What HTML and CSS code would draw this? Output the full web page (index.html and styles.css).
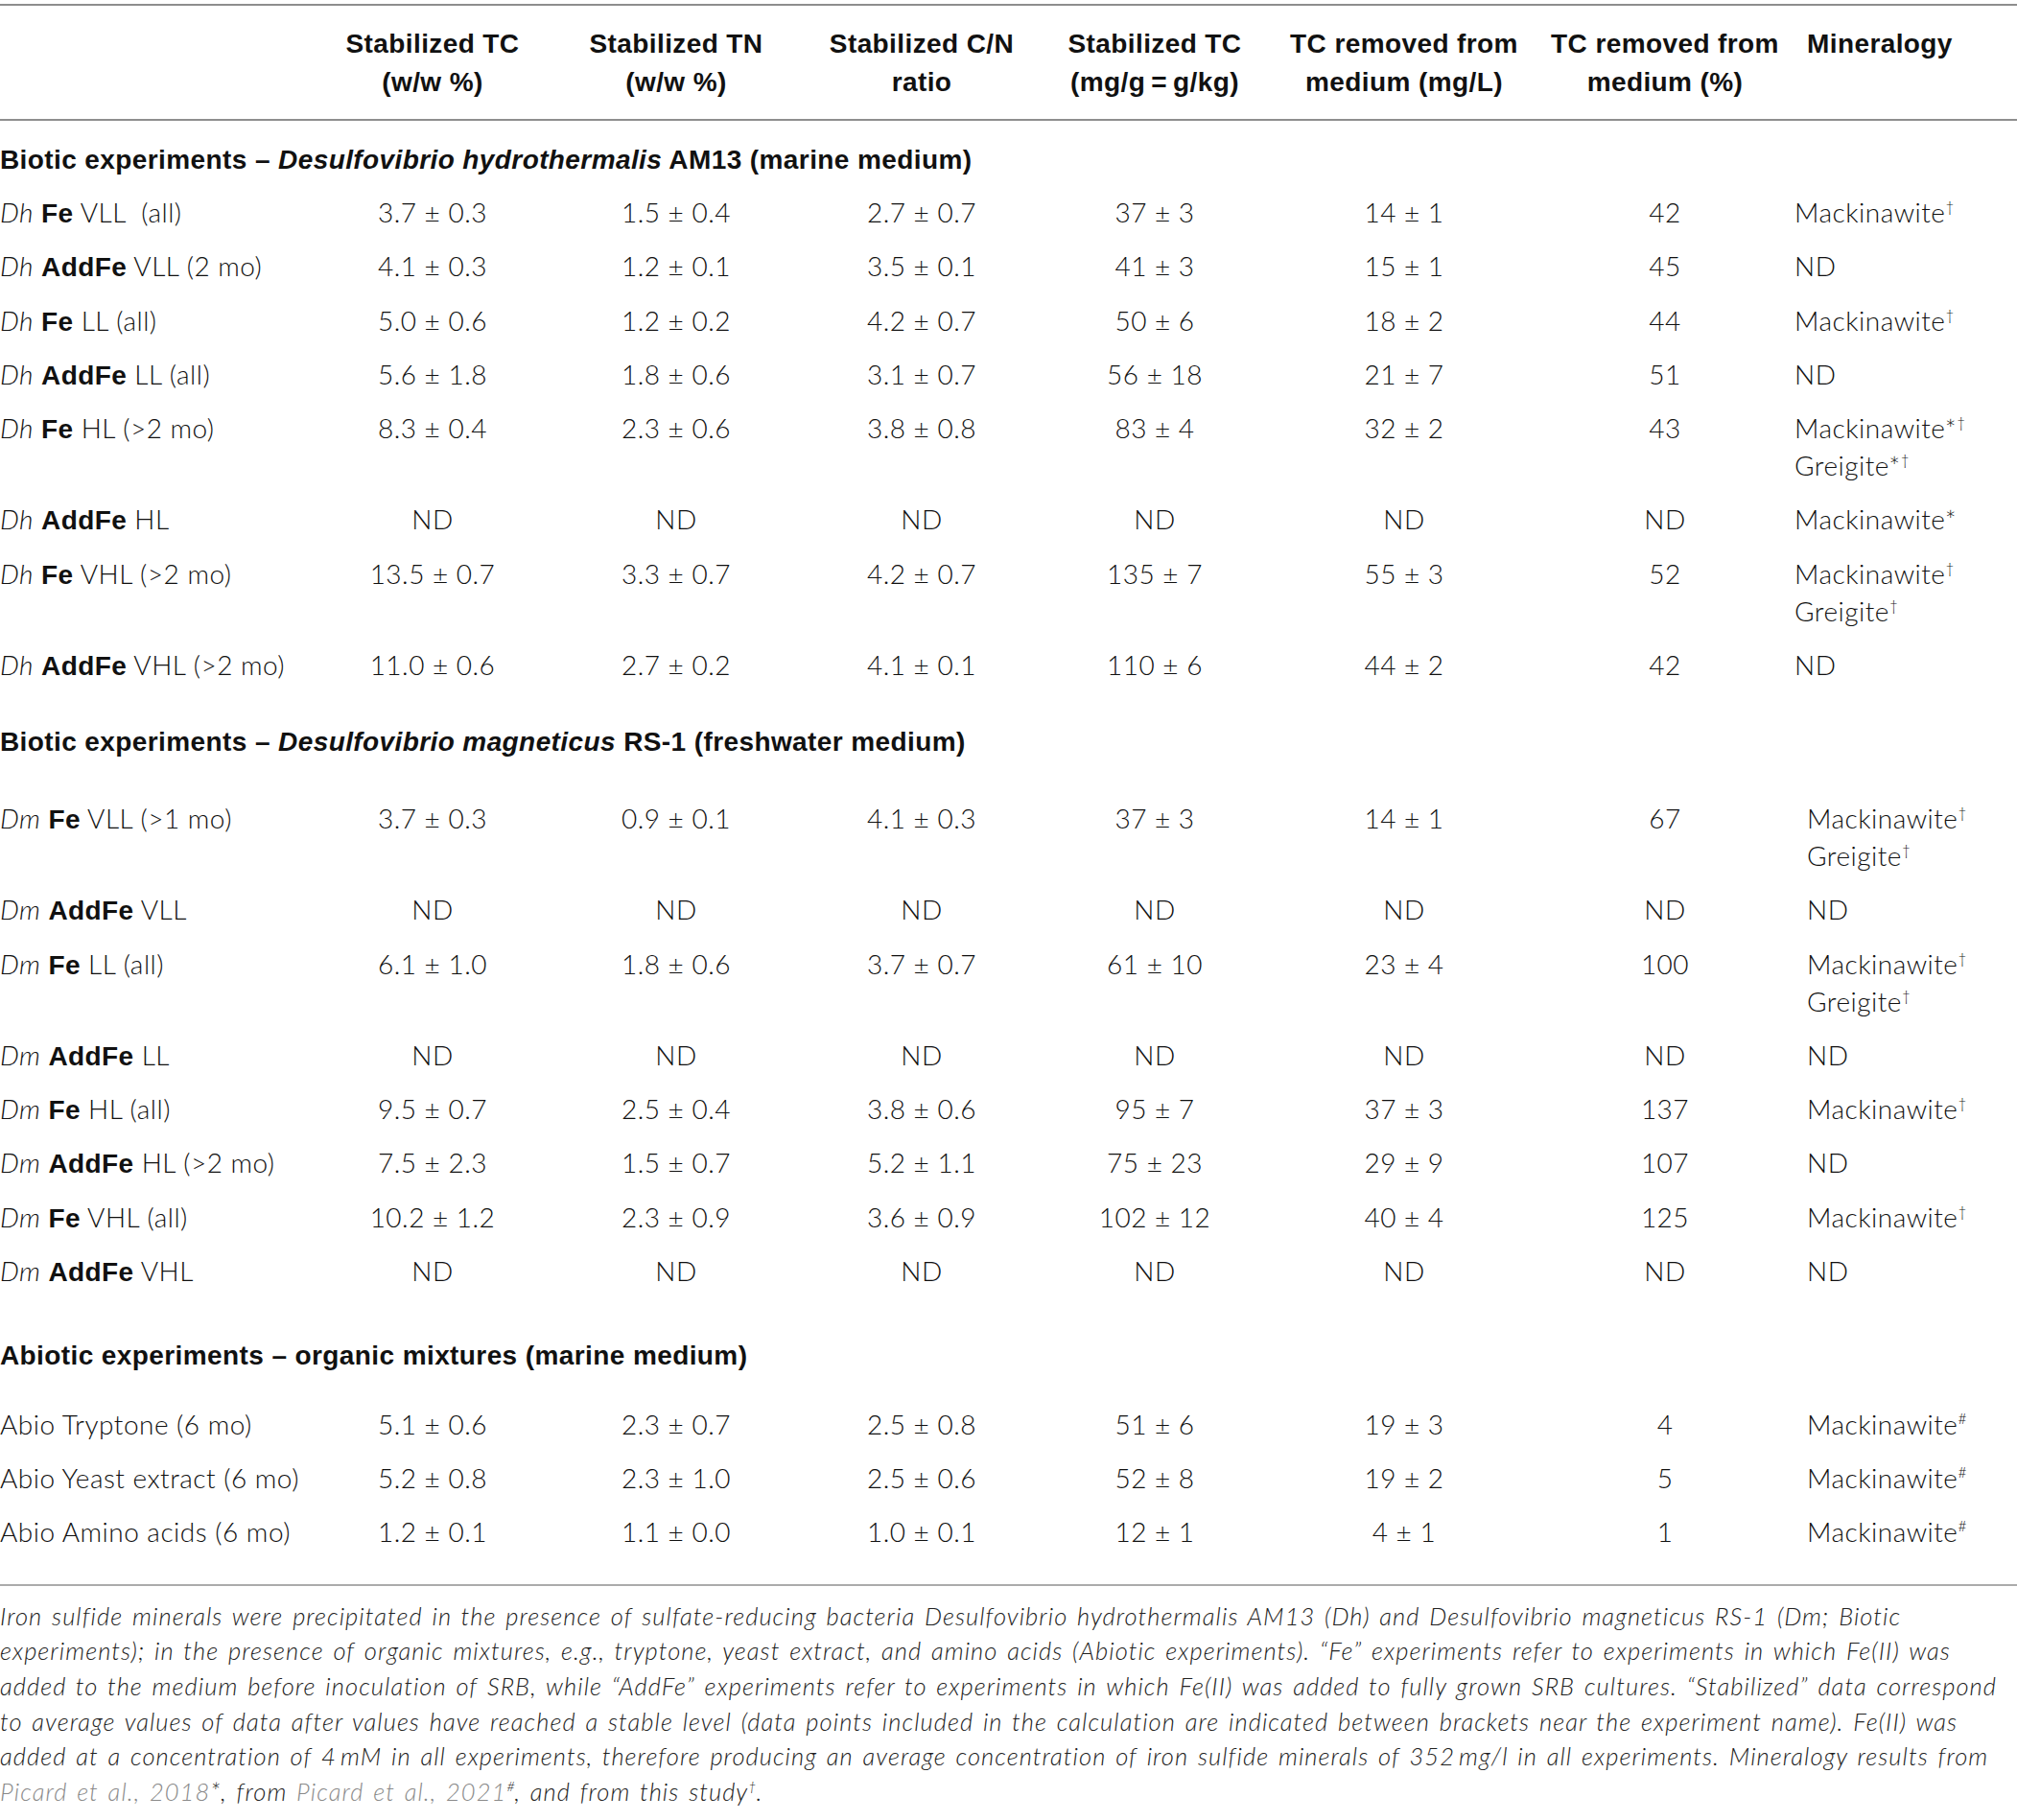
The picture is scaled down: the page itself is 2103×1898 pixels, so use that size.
FILE: index.html
```html
<!DOCTYPE html>
<html lang="en">
<head>
<meta charset="utf-8">
<title>Table</title>
<link rel="stylesheet" href="styles.css">
</head>
<body>
<table class="tbl">
  <colgroup>
    <col class="c-lbl"><col class="c1"><col class="c2"><col class="c3"><col class="c4"><col class="c5"><col class="c6"><col class="c7">
  </colgroup>
  <thead>
    <tr>
      <th></th>
      <th>Stabilized TC<br>(w/w %)</th>
      <th>Stabilized TN<br>(w/w %)</th>
      <th>Stabilized C/N<br>ratio</th>
      <th>Stabilized TC<br>(mg/g&thinsp;=&thinsp;g/kg)</th>
      <th>TC removed from<br>medium (mg/L)</th>
      <th>TC removed from<br>medium (%)</th>
      <th class="min">Mineralogy</th>
    </tr>
  </thead>
  <tbody>
    <tr class="sec sec1"><td colspan="8">Biotic experiments – <i>Desulfovibrio hydrothermalis</i> AM13 (marine medium)</td></tr>
    <tr class="dh"><td class="lbl"><i>Dh</i> <b>Fe</b> VLL&nbsp; (all)</td><td>3.7 ± 0.3</td><td>1.5 ± 0.4</td><td>2.7 ± 0.7</td><td>37 ± 3</td><td>14 ± 1</td><td>42</td><td class="min">Mackinawite<sup>†</sup></td></tr>
    <tr class="dh"><td class="lbl"><i>Dh</i> <b>AddFe</b> VLL (2 mo)</td><td>4.1 ± 0.3</td><td>1.2 ± 0.1</td><td>3.5 ± 0.1</td><td>41 ± 3</td><td>15 ± 1</td><td>45</td><td class="min">ND</td></tr>
    <tr class="dh"><td class="lbl"><i>Dh</i> <b>Fe</b> LL (all)</td><td>5.0 ± 0.6</td><td>1.2 ± 0.2</td><td>4.2 ± 0.7</td><td>50 ± 6</td><td>18 ± 2</td><td>44</td><td class="min">Mackinawite<sup>†</sup></td></tr>
    <tr class="dh"><td class="lbl"><i>Dh</i> <b>AddFe</b> LL (all)</td><td>5.6 ± 1.8</td><td>1.8 ± 0.6</td><td>3.1 ± 0.7</td><td>56 ± 18</td><td>21 ± 7</td><td>51</td><td class="min">ND</td></tr>
    <tr class="dh"><td class="lbl"><i>Dh</i> <b>Fe</b> HL (&gt;2 mo)</td><td>8.3 ± 0.4</td><td>2.3 ± 0.6</td><td>3.8 ± 0.8</td><td>83 ± 4</td><td>32 ± 2</td><td>43</td><td class="min">Mackinawite*<sup>†</sup><br>Greigite*<sup>†</sup></td></tr>
    <tr class="dh"><td class="lbl"><i>Dh</i> <b>AddFe</b> HL</td><td>ND</td><td>ND</td><td>ND</td><td>ND</td><td>ND</td><td>ND</td><td class="min">Mackinawite*</td></tr>
    <tr class="dh"><td class="lbl"><i>Dh</i> <b>Fe</b> VHL (&gt;2 mo)</td><td>13.5 ± 0.7</td><td>3.3 ± 0.7</td><td>4.2 ± 0.7</td><td>135 ± 7</td><td>55 ± 3</td><td>52</td><td class="min">Mackinawite<sup>†</sup><br>Greigite<sup>†</sup></td></tr>
    <tr class="dh"><td class="lbl"><i>Dh</i> <b>AddFe</b> VHL (&gt;2 mo)</td><td>11.0 ± 0.6</td><td>2.7 ± 0.2</td><td>4.1 ± 0.1</td><td>110 ± 6</td><td>44 ± 2</td><td>42</td><td class="min">ND</td></tr>

    <tr class="sec sec2"><td colspan="8">Biotic experiments – <i>Desulfovibrio magneticus</i> RS-1 (freshwater medium)</td></tr>
    <tr><td class="lbl"><i>Dm</i> <b>Fe</b> VLL (&gt;1 mo)</td><td>3.7 ± 0.3</td><td>0.9 ± 0.1</td><td>4.1 ± 0.3</td><td>37 ± 3</td><td>14 ± 1</td><td>67</td><td class="min">Mackinawite<sup>†</sup><br>Greigite<sup>†</sup></td></tr>
    <tr><td class="lbl"><i>Dm</i> <b>AddFe</b> VLL</td><td>ND</td><td>ND</td><td>ND</td><td>ND</td><td>ND</td><td>ND</td><td class="min">ND</td></tr>
    <tr><td class="lbl"><i>Dm</i> <b>Fe</b> LL (all)</td><td>6.1 ± 1.0</td><td>1.8 ± 0.6</td><td>3.7 ± 0.7</td><td>61 ± 10</td><td>23 ± 4</td><td>100</td><td class="min">Mackinawite<sup>†</sup><br>Greigite<sup>†</sup></td></tr>
    <tr><td class="lbl"><i>Dm</i> <b>AddFe</b> LL</td><td>ND</td><td>ND</td><td>ND</td><td>ND</td><td>ND</td><td>ND</td><td class="min">ND</td></tr>
    <tr><td class="lbl"><i>Dm</i> <b>Fe</b> HL (all)</td><td>9.5 ± 0.7</td><td>2.5 ± 0.4</td><td>3.8 ± 0.6</td><td>95 ± 7</td><td>37 ± 3</td><td>137</td><td class="min">Mackinawite<sup>†</sup></td></tr>
    <tr><td class="lbl"><i>Dm</i> <b>AddFe</b> HL (&gt;2 mo)</td><td>7.5 ± 2.3</td><td>1.5 ± 0.7</td><td>5.2 ± 1.1</td><td>75 ± 23</td><td>29 ± 9</td><td>107</td><td class="min">ND</td></tr>
    <tr><td class="lbl"><i>Dm</i> <b>Fe</b> VHL (all)</td><td>10.2 ± 1.2</td><td>2.3 ± 0.9</td><td>3.6 ± 0.9</td><td>102 ± 12</td><td>40 ± 4</td><td>125</td><td class="min">Mackinawite<sup>†</sup></td></tr>
    <tr><td class="lbl"><i>Dm</i> <b>AddFe</b> VHL</td><td>ND</td><td>ND</td><td>ND</td><td>ND</td><td>ND</td><td>ND</td><td class="min">ND</td></tr>

    <tr class="sec sec3"><td colspan="8">Abiotic experiments – organic mixtures (marine medium)</td></tr>
    <tr><td class="lbl">Abio Tryptone (6 mo)</td><td>5.1 ± 0.6</td><td>2.3 ± 0.7</td><td>2.5 ± 0.8</td><td>51 ± 6</td><td>19 ± 3</td><td>4</td><td class="min">Mackinawite<sup>#</sup></td></tr>
    <tr><td class="lbl">Abio Yeast extract (6 mo)</td><td>5.2 ± 0.8</td><td>2.3 ± 1.0</td><td>2.5 ± 0.6</td><td>52 ± 8</td><td>19 ± 2</td><td>5</td><td class="min">Mackinawite<sup>#</sup></td></tr>
    <tr class="last"><td class="lbl">Abio Amino acids (6 mo)</td><td>1.2 ± 0.1</td><td>1.1 ± 0.0</td><td>1.0 ± 0.1</td><td>12 ± 1</td><td>4 ± 1</td><td>1</td><td class="min">Mackinawite<sup>#</sup></td></tr>
  </tbody>
</table>
<p class="note">Iron sulfide minerals were precipitated in the presence of sulfate-reducing bacteria Desulfovibrio hydrothermalis AM13 (Dh) and Desulfovibrio magneticus RS-1 (Dm; Biotic<br>experiments); in the presence of organic mixtures, e.g., tryptone, yeast extract, and amino acids (Abiotic experiments). “Fe” experiments refer to experiments in which Fe(II) was<br>added to the medium before inoculation of SRB, while “AddFe” experiments refer to experiments in which Fe(II) was added to fully grown SRB cultures. “Stabilized” data correspond<br>to average values of data after values have reached a stable level (data points included in the calculation are indicated between brackets near the experiment name). Fe(II) was<br>added at a concentration of 4&thinsp;mM in all experiments, therefore producing an average concentration of iron sulfide minerals of 352&thinsp;mg/l in all experiments. Mineralogy results from<br><span class="ref">Picard et al., 2018</span>*, from <span class="ref">Picard et al., 2021</span><sup>#</sup>, and from this study<sup>†</sup>.</p>
</body>
</html>
```

FILE: styles.css
```css
html, body {
  margin: 0;
  padding: 0;
  background: #ffffff;
}

body {
  color: #111111;
  font-family: "Lato", "Liberation Sans", Arial, sans-serif;
  font-weight: 300;
  font-size: 28px;
}

.tbl {
  width: 2103px;
  table-layout: fixed;
  border-collapse: separate;
  border-spacing: 0;
  margin-top: 4px;
  border-top: 2px solid #8e8e8e;
}

.c-lbl { width: 324px; }
.c1 { width: 254px; }
.c2 { width: 254px; }
.c3 { width: 258px; }
.c4 { width: 228px; }
.c5 { width: 292px; }
.c6 { width: 252px; }
.c7 { width: 241px; }

.tbl th {
  font-family: "Liberation Sans", Arial, sans-serif;
  font-weight: bold;
  line-height: 40px;
  padding: 20px 0 18px;
  border-bottom: 2px solid #8e8e8e;
  text-align: center;
  vertical-align: top;
  letter-spacing: 0.4px;
  white-space: nowrap;
}

.tbl th.min {
  text-align: left;
  padding-left: 22px;
}

.tbl td {
  line-height: 39px;
  padding: 8.625px 0;
  text-align: center;
  vertical-align: top;
  white-space: nowrap;
  letter-spacing: 0.5px;
}

.tbl td.lbl {
  text-align: left;
}

.tbl td.min {
  text-align: left;
  padding-left: 22px;
}

.tbl tr.dh td.min {
  padding-left: 9px;
}

.tbl td b {
  font-family: "Liberation Sans", Arial, sans-serif;
  font-weight: bold;
  letter-spacing: 0.4px;
  line-height: 1;
}

.tbl tr.sec td {
  font-family: "Liberation Sans", Arial, sans-serif;
  font-weight: bold;
  text-align: left;
  letter-spacing: 0.4px;
}

.tbl tr.sec1 td { padding: 20.5px 0 8.1px; }
.tbl tr.sec2 td { padding: 32.4px 0 32.4px; }
.tbl tr.sec3 td { padding: 40.4px 0 24.4px; }

.tbl tr.last td {
  padding-bottom: 35px;
  border-bottom: 2px solid #ababab;
}

sup {
  font-size: 0.55em;
  line-height: 0;
  vertical-align: 0.7em;
  letter-spacing: 0;
}

.note {
  margin: 12.5px 0 0;
  font-size: 25.5px;
  line-height: 36.6px;
  font-style: italic;
  color: #222222;
  white-space: nowrap;
  letter-spacing: 1.05px;
  word-spacing: 2.3px;
}

.note .ref {
  color: #8a8a8a;
}
```
